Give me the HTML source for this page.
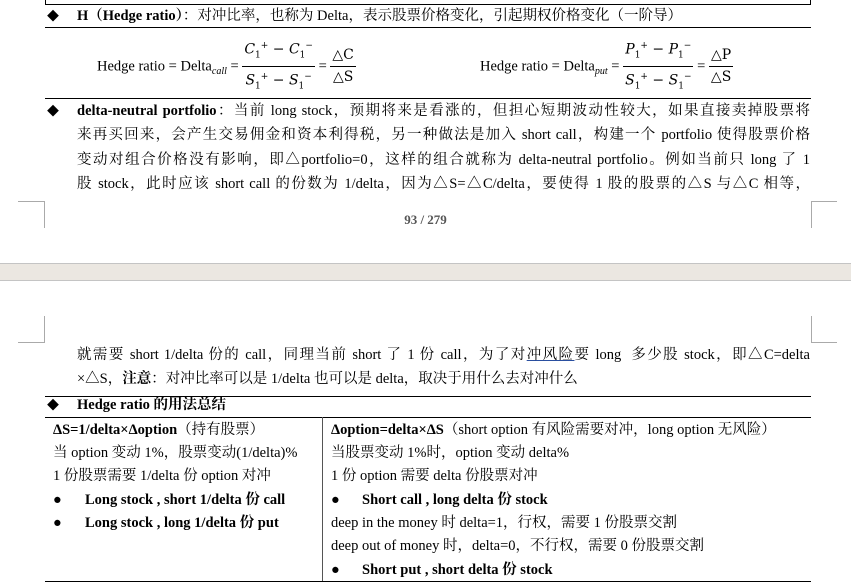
<!DOCTYPE html>
<html><head><meta charset="utf-8"><style>
body{margin:0;width:851px;height:586px;position:relative;background:#fff;overflow:hidden;font-family:"Liberation Serif","Noto Serif CJK SC",serif;font-size:14.5px;color:#000}
.a{position:absolute;white-space:nowrap;line-height:20px}
.j{text-align:justify;text-align-last:justify;white-space:normal}
.h{position:absolute;height:1px;background:#000}
.v{position:absolute;width:1px;background:#000}
.g{position:absolute;background:#aaa}
b{font-weight:bold}
.d{font-size:12px}
.frac{display:inline-block;vertical-align:middle;text-align:center;font-family:"DejaVu Serif","Liberation Serif",serif;font-size:14px}
.frac span{display:block;line-height:21px;padding:0 2px}
.frac .n{border-bottom:1px solid #000}
.f{position:absolute;font-size:14.5px;white-space:nowrap}
i{font-style:italic}
</style></head><body>
<div class="h" style="left:45px;top:4px;width:766px"></div>
<div class="v" style="left:45px;top:0;height:5px"></div>
<div class="v" style="left:810px;top:0;height:5px"></div>

<div class="a d" style="left:47px;top:6px">◆</div>
<div class="a" style="left:77px;top:6px"><b>H（Hedge ratio）</b>：对冲比率，也称为 Delta，表示股票价格变化，引起期权价格变化（一阶导）</div>
<div class="h" style="left:45px;top:27px;width:766px"></div>

<div class="f" style="left:97px;top:36px">Hedge ratio = Delta<sub style="font-size:10px"><i>call</i></sub> = <span class="frac"><span class="n"><i>C</i><sub style="font-size:9px">1</sub><sup style="font-size:9px">+</sup> − <i>C</i><sub style="font-size:9px">1</sub><sup style="font-size:9px">−</sup></span><span><i>S</i><sub style="font-size:9px">1</sub><sup style="font-size:9px">+</sup> − <i>S</i><sub style="font-size:9px">1</sub><sup style="font-size:9px">−</sup></span></span> = <span class="frac"><span class="n">△C</span><span>△S</span></span></div>
<div class="f" style="left:480px;top:36px">Hedge ratio = Delta<sub style="font-size:10px"><i>put</i></sub> = <span class="frac"><span class="n"><i>P</i><sub style="font-size:9px">1</sub><sup style="font-size:9px">+</sup> − <i>P</i><sub style="font-size:9px">1</sub><sup style="font-size:9px">−</sup></span><span><i>S</i><sub style="font-size:9px">1</sub><sup style="font-size:9px">+</sup> − <i>S</i><sub style="font-size:9px">1</sub><sup style="font-size:9px">−</sup></span></span> = <span class="frac"><span class="n">△P</span><span>△S</span></span></div>
<div class="h" style="left:45px;top:98px;width:766px"></div>

<div class="a d" style="left:47px;top:101px">◆</div>
<div class="a j" style="left:77px;top:101px;width:733px"><b>delta-neutral portfolio</b>：当前 long stock，预期将来是看涨的，但担心短期波动性较大，如果直接卖掉股票将</div>
<div class="a j" style="left:77px;top:125px;width:733px">来再买回来，会产生交易佣金和资本利得税，另一种做法是加入 short call，构建一个 portfolio 使得股票价格</div>
<div class="a j" style="left:77px;top:150px;width:733px">变动对组合价格没有影响，即△portfolio=0，这样的组合就称为 delta-neutral portfolio。例如当前只 long 了 1</div>
<div class="a j" style="left:77px;top:174px;width:733px">股 stock，此时应该 short call 的份数为 1/delta，因为△S=△C/delta，要使得 1 股的股票的△S 与△C 相等，</div>

<div class="g" style="left:18px;top:201px;width:27px;height:1px"></div>
<div class="g" style="left:44px;top:201px;width:1px;height:27px"></div>
<div class="g" style="left:811px;top:201px;width:26px;height:1px"></div>
<div class="g" style="left:811px;top:201px;width:1px;height:27px"></div>
<div class="a" style="left:0;width:851px;text-align:center;top:210px;font-size:13px;color:#555;font-weight:bold">93 / 279</div>

<div style="position:absolute;left:0;top:263px;width:851px;height:16px;background:#ebe7e1;border-top:1px solid #c4c4c4;border-bottom:1px solid #c4c4c4"></div>

<div class="g" style="left:44px;top:316px;width:1px;height:27px"></div>
<div class="g" style="left:18px;top:342px;width:27px;height:1px"></div>
<div class="g" style="left:811px;top:316px;width:1px;height:27px"></div>
<div class="g" style="left:811px;top:342px;width:26px;height:1px"></div>

<div class="a j" style="left:77px;top:345px;width:733px">就需要 short 1/delta 份的 call，同理当前 short 了 1 份 call，为了对<span style="text-decoration:underline;text-decoration-color:#2a4fa0">冲风险</span>要 long&nbsp; 多少股 stock，即△C=delta</div>
<div class="a" style="left:77px;top:369px">×△S，<b>注意</b>：对冲比率可以是 1/delta 也可以是 delta，取决于用什么去对冲什么</div>
<div class="h" style="left:45px;top:396px;width:766px"></div>
<div class="a d" style="left:47px;top:395px">◆</div>
<div class="a" style="left:77px;top:395px"><b>Hedge ratio 的用法总结</b></div>
<div class="h" style="left:45px;top:417px;width:766px"></div>
<div class="v" style="left:322px;top:417px;height:164px;background:#555"></div>
<div class="h" style="left:45px;top:581px;width:766px"></div>

<div class="a" style="left:53px;top:420px"><b>ΔS=1/delta×Δoption</b>（持有股票）</div>
<div class="a" style="left:53px;top:443px">当 option 变动 1%，股票变动(1/delta)%</div>
<div class="a" style="left:53px;top:466px">1 份股票需要 1/delta 份 option 对冲</div>
<div class="a" style="left:53px;top:490px">●</div><div class="a" style="left:85px;top:490px"><b>Long stock , short 1/delta 份 call</b></div>
<div class="a" style="left:53px;top:513px">●</div><div class="a" style="left:85px;top:513px"><b>Long stock , long 1/delta 份 put</b></div>

<div class="a" style="left:331px;top:420px"><b>Δoption=delta×ΔS</b>（short option 有风险需要对冲，long option 无风险）</div>
<div class="a" style="left:331px;top:443px">当股票变动 1%时，option 变动 delta%</div>
<div class="a" style="left:331px;top:466px">1 份 option 需要 delta 份股票对冲</div>
<div class="a" style="left:331px;top:490px">●</div><div class="a" style="left:362px;top:490px"><b>Short call , long delta 份 stock</b></div>
<div class="a" style="left:331px;top:513px">deep in the money 时 delta=1，行权，需要 1 份股票交割</div>
<div class="a" style="left:331px;top:536px">deep out of money 时，delta=0，不行权，需要 0 份股票交割</div>
<div class="a" style="left:331px;top:560px">●</div><div class="a" style="left:362px;top:560px"><b>Short put , short delta 份 stock</b></div>
</body></html>
